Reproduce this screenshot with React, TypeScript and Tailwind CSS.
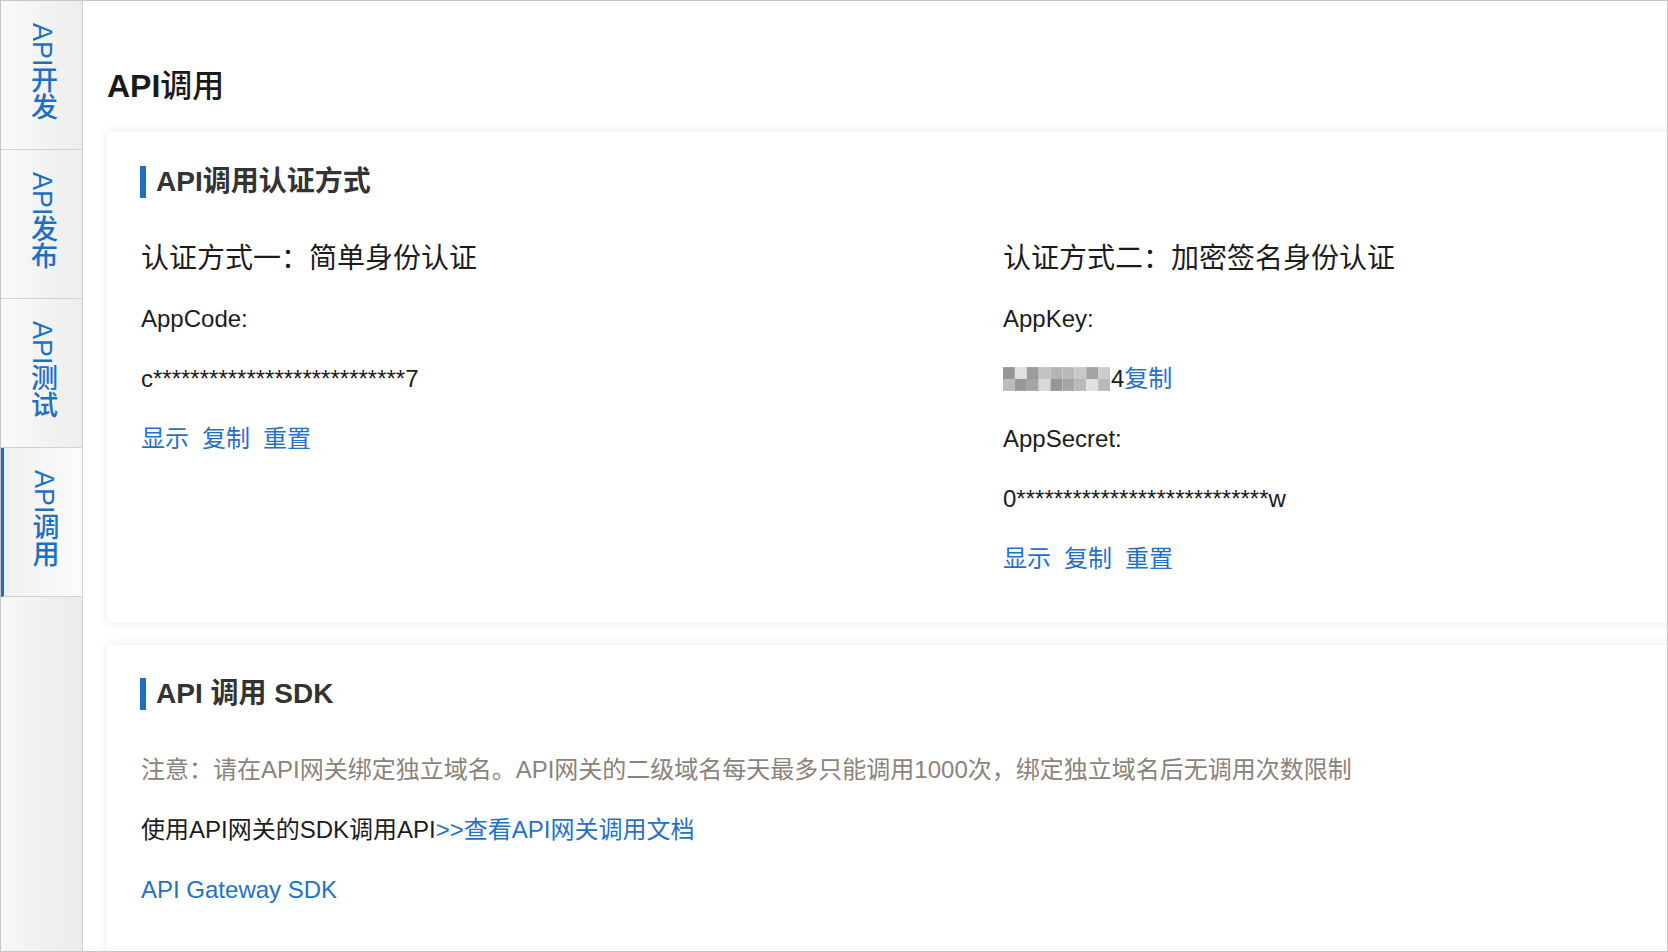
import React from 'react';

const FONT = { fontFamily: '"Liberation Sans", "Noto Sans CJK SC", sans-serif' };

const TABS = ['API开发', 'API发布', 'API测试', 'API调用'];
const ACTIVE = 3;

// masked AppKey, drawn as pixel blocks
const BLOCKS = Array.from({ length: 18 }, (_, i) => {
  const a = Math.abs(Math.sin(i * 12.9898) * 43758.5453) % 1;
  const col = i % 9;
  const row = Math.floor(i / 9);
  const shade = Math.round(150 + a * 80);
  return { x: col * 12, y: row * 12, fill: `rgb(${shade},${shade},${shade})` };
});

const STARS = '*'.repeat(27);

function SideTabs() {
  return (
    <div className="flex w-[82px] shrink-0 flex-col border-r border-[#d2d2d2] bg-gradient-to-r from-[#f7f7f7] to-[#ebebeb]">
      {TABS.map((t, i) => (
        <div
          key={t}
          className={
            i === ACTIVE
              ? 'flex h-[149px] justify-center border-b border-l-[3px] border-b-[#d2d2d2] border-l-[#1b6fc4] bg-gradient-to-r from-[#f1f1f1] to-[#fbfbfb] pt-[22px]'
              : 'flex h-[149px] justify-center border-b border-[#d2d2d2] bg-gradient-to-r from-[#fafafa] to-[#ededed] pt-[22px]'
          }
        >
          <span className="text-[27px] font-medium leading-none text-[#1b6fc4] [writing-mode:vertical-rl]">{t}</span>
        </div>
      ))}
      <div className="flex-1" />
    </div>
  );
}

function SectionTitle({ children }: { children: React.ReactNode }) {
  return (
    <div className="flex h-[32px] items-center">
      <div className="h-[32px] w-[6px] bg-[#1b6fc4]" />
      <h2 className="ml-[10px] text-[28px] font-bold leading-none text-[#333]">{children}</h2>
    </div>
  );
}

function Row({ children, className = '' }: { children: React.ReactNode; className?: string }) {
  return <div className={`flex h-[60px] items-center text-[24px] ${className}`}>{children}</div>;
}

function Actions() {
  return (
    <Row className="gap-[13px] text-[#1f72c7]">
      <span>显示</span>
      <span>复制</span>
      <span>重置</span>
    </Row>
  );
}

export default function App() {
  return (
    <div style={FONT} className="flex h-[952px] w-[1668px] overflow-hidden border border-[#c6c6c6] bg-white text-[#1c1c1c]">
      <SideTabs />

      <main className="flex-1 overflow-hidden pl-[24px] pt-[65px]">
        <h1 className="flex h-[40px] items-center text-[32px] font-medium text-[#1a1a1a]">
          <span className="font-bold">API</span>调用
        </h1>

        {/* 认证方式 */}
        <section className="mr-[-40px] mt-[26px] bg-white pb-[34px] pl-[33px] pt-[34px] shadow-[0_0_10px_rgba(0,0,0,0.09)]">
          <SectionTitle>API调用认证方式</SectionTitle>
          <div className="mt-[31px] grid grid-cols-[862px_1fr] pl-[1px]">
            <div>
              <Row className="text-[28px]">认证方式一：简单身份认证</Row>
              <Row>AppCode:</Row>
              <Row>c{STARS}7</Row>
              <Actions />
            </div>
            <div>
              <Row className="text-[28px]">认证方式二：加密签名身份认证</Row>
              <Row>AppKey:</Row>
              <Row>
                <svg width="107" height="24" viewBox="0 0 108 24" className="mr-[1px]">
                  {BLOCKS.map((b, i) => (
                    <rect key={i} x={b.x} y={b.y} width="12" height="12" fill={b.fill} />
                  ))}
                </svg>
                <span>4</span>
                <span className="text-[#1f72c7]">复制</span>
              </Row>
              <Row>AppSecret:</Row>
              <Row>0{STARS}w</Row>
              <Actions />
            </div>
          </div>
        </section>

        {/* SDK */}
        <section className="mr-[-40px] mt-[22px] h-[400px] bg-white pl-[33px] pt-[33px] shadow-[0_0_10px_rgba(0,0,0,0.09)]">
          <SectionTitle>API 调用 SDK</SectionTitle>
          <div className="mt-[30px] pl-[1px]">
            <Row className="text-[#8c8279]">
              注意：请在API网关绑定独立域名。API网关的二级域名每天最多只能调用1000次，绑定独立域名后无调用次数限制
            </Row>
            <Row>
              使用API网关的SDK调用API<span className="text-[#1f72c7]">&gt;&gt;查看API网关调用文档</span>
            </Row>
            <Row className="text-[#1f72c7]">API Gateway SDK</Row>
          </div>
        </section>
      </main>
    </div>
  );
}
